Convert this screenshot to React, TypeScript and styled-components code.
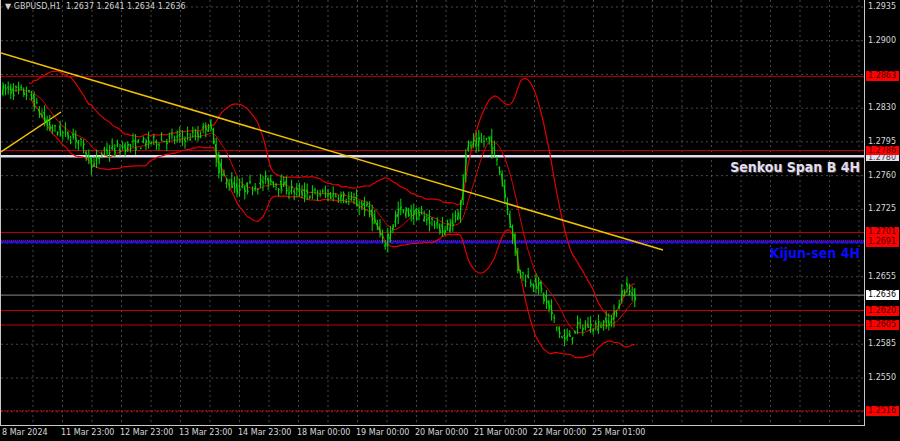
import React from "react";
import styled, { createGlobalStyle } from "styled-components";

const Global = createGlobalStyle`
  html, body { margin: 0; padding: 0; background: #000; }
  body { font-family: "DejaVu Sans", "Liberation Sans", sans-serif; }
`;

const W = 865;
const H = 426;
const py = (p: number) => 7 + (12935 - p * 10000) * 0.9636;

const Frame = styled.div`
  display: grid;
  grid-template-columns: ${W}px 35px;
  grid-template-rows: ${H}px 15px;
  width: 900px;
  height: 441px;
  background: #000;
  overflow: hidden;
`;
const ChartBox = styled.div`
  position: relative;
  border: 1px solid #c8c8c8;
  border-top: none;
  box-sizing: border-box;
`;
const Header = styled.div`
  position: absolute;
  left: 4px;
  top: 2px;
  font-size: 8px;
  color: #d0d0d0;
`;
const Axis = styled.div`
  position: relative;
  font-size: 8px;
  color: #d8d8d8;
`;
const AxisLabel = styled.div<{ $top: number; $bg?: string; $fg?: string; $thin?: boolean }>`
  position: absolute;
  left: 1px;
  top: ${(p) => (p.$thin ? p.$top - 1 : p.$top - 5)}px;
  width: 33px;
  height: ${(p) => (p.$thin ? 6 : 10)}px;
  line-height: ${(p) => (p.$thin ? 6 : 10)}px;
  overflow: hidden;
  padding-left: 2px;
  box-sizing: border-box;
  background: ${(p) => p.$bg || "transparent"};
  color: ${(p) => p.$fg || "#d8d8d8"};
`;
const TimeAxis = styled.div`
  display: flex;
  padding: 2px 0 0 2px;
  font-size: 8px;
  color: #d8d8d8;
`;
const TimeLabel = styled.div`
  flex: 0 0 59px;
  white-space: nowrap;
`;
const LineTag = styled.div<{ $top: number; $color: string; $shadow: string }>`
  position: absolute;
  right: 4px;
  top: ${(p) => p.$top}px;
  font-family: "DejaVu Sans Condensed", "Liberation Sans Narrow", sans-serif;
  font-weight: bold;
  font-size: 14px;
  color: ${(p) => p.$color};
  text-shadow: 1px 1px 0 ${(p) => p.$shadow};
`;

const keys: [number, number][] = [
  [2, 1.285], [30, 1.2845], [50, 1.281], [80, 1.2797], [95, 1.277], [105, 1.2785], [150, 1.2795],
  [200, 1.2802], [210, 1.2815], [222, 1.276], [240, 1.2745], [270, 1.2755], [300, 1.2742],
  [340, 1.274], [370, 1.2725], [385, 1.2688], [400, 1.2725], [430, 1.2715], [445, 1.2702],
  [460, 1.272], [468, 1.279], [490, 1.2798], [500, 1.277], [510, 1.272], [520, 1.266],
  [540, 1.2645], [555, 1.261], [565, 1.2588], [580, 1.2603], [600, 1.2605], [615, 1.2612],
  [625, 1.2645], [635, 1.2636],
];
const interp = (x: number) => {
  for (let i = 0; i < keys.length - 1; i++) {
    const [x0, p0] = keys[i], [x1, p1] = keys[i + 1];
    if (x >= x0 && x <= x1) return p0 + ((p1 - p0) * (x - x0)) / (x1 - x0);
  }
  return keys[keys.length - 1][1];
};
let seed = 7;
const rnd = () => { seed = (seed * 16807) % 2147483647; return seed / 2147483647; };
type C = { x: number; o: number; c: number; h: number; l: number };
const candles: C[] = [];
for (let x = 2; x <= 635; x += 2.6) {
  const o = interp(x) + (rnd() - 0.5) * 0.0012;
  const c = interp(x + 2.6) + (rnd() - 0.5) * 0.0012;
  const h = Math.max(o, c) + rnd() * 0.0008;
  const l = Math.min(o, c) - rnd() * 0.0008;
  candles.push({ x, o, c, h, l });
}
const band = (n: number, k: number) =>
  candles.map((_, i) => {
    const s = candles.slice(Math.max(0, i - n + 1), i + 1).map((c) => c.c);
    const m = s.reduce((a, b) => a + b, 0) / s.length;
    const sd = Math.sqrt(s.reduce((a, b) => a + (b - m) ** 2, 0) / s.length);
    return m + k * sd;
  });
const pathOf = (vals: number[], from = 0) =>
  vals.slice(from).map((v, i) => `${i ? "L" : "M"}${candles[i + from].x.toFixed(1)},${py(v).toFixed(1)}`).join(" ");
const up = band(22, 2.1), lo = band(22, -2.1), mid = band(10, 0);

const redLevels = [1.2863, 1.2786, 1.2701, 1.262, 1.2605];
const grid = [1.2935, 1.29, 1.2865, 1.283, 1.2795, 1.276, 1.2725, 1.269, 1.2655, 1.262, 1.2585, 1.255, 1.2515];
const axisLabels = [1.2935, 1.29, 1.283, 1.2795, 1.276, 1.2725, 1.2655, 1.2585, 1.255];
const times = ["8 Mar 2024", "11 Mar 23:00", "12 Mar 23:00", "13 Mar 23:00", "14 Mar 23:00",
  "18 Mar 00:00", "19 Mar 00:00", "20 Mar 00:00", "21 Mar 00:00", "22 Mar 00:00", "25 Mar 01:00"];

export default function App() {
  return (
    <Frame>
      <Global />
      <ChartBox>
        <svg width={W - 2} height={H - 1}>
          {Array.from({ length: 29 }, (_, i) => 32 + i * 29.5).map((x) => (
            <line key={x} x1={x} x2={x} y1={0} y2={H} stroke="#777" strokeDasharray="2 3" strokeWidth={0.6} />
          ))}
          {grid.map((g) => (
            <line key={g} x1={0} x2={W} y1={py(g)} y2={py(g)} stroke="#777" strokeDasharray="2 3" strokeWidth={0.6} />
          ))}
          <line x1={0} x2={W} y1={py(1.2516)} y2={py(1.2516)} stroke="#d00000" strokeDasharray="2 1" />
          {redLevels.map((p) => (
            <line key={p} x1={0} x2={W} y1={py(p)} y2={py(p)} stroke="#c00000" />
          ))}
          <line x1={0} x2={W} y1={py(1.2636)} y2={py(1.2636)} stroke="#888" />
          <line x1={0} x2={W} y1={py(1.278)} y2={py(1.278)} stroke="#e6dcf0" strokeWidth={2.5} />
          <line x1={0} x2={W} y1={py(1.2691)} y2={py(1.2691)} stroke="#1010ff" strokeWidth={2.5} />
          <line x1={0} x2={W} y1={py(1.2691) - 1.5} y2={py(1.2691) - 1.5} stroke="#d00000" strokeDasharray="1 1" />
          <path d={pathOf(up, 10)} stroke="#e00000" fill="none" strokeWidth={1.2} />
          <path d={pathOf(lo, 10)} stroke="#e00000" fill="none" strokeWidth={1.2} />
          <path d={pathOf(mid, 3)} stroke="#e00000" fill="none" />
          <path d="M0,152 L60,112" stroke="#f0c000" strokeWidth={1.5} />
          {candles.map((c, i) => (
            <g key={i} stroke="#00e000">
              <line x1={c.x} x2={c.x} y1={py(c.h)} y2={py(c.l)} />
              <line x1={c.x - 0.8} x2={c.x + 0.8} y1={py(c.o)} y2={py(c.c)} />
            </g>
          ))}
          <line x1={0} y1={53} x2={662} y2={250} stroke="#f0c000" strokeWidth={1.5} />
        </svg>
        <Header>▼ GBPUSD,H1&nbsp; 1.2637 1.2641 1.2634 1.2636</Header>
        <LineTag $top={py(1.278) + 3} $color="#e4dcf0" $shadow="#444">Senkou Span B 4H</LineTag>
        <LineTag $top={py(1.2691) + 3} $color="#0a0aff" $shadow="#000">Kijun-sen 4H</LineTag>
      </ChartBox>
      <Axis>
        {axisLabels.map((a) => (
          <AxisLabel key={a} $top={py(a)}>{a.toFixed(4)}</AxisLabel>
        ))}
        {redLevels.concat([1.2691, 1.2516]).map((p) => (
          <AxisLabel key={p} $top={py(p)} $bg="#ff0000" $fg="#400">{p.toFixed(4)}</AxisLabel>
        ))}
        <AxisLabel $top={py(1.278)} $thin $bg="#e8e0f0" $fg="#444">1.2780</AxisLabel>
        <AxisLabel $top={py(1.2636)} $bg="#fff" $fg="#000">1.2636</AxisLabel>
      </Axis>
      <TimeAxis>
        {times.map((t) => (
          <TimeLabel key={t}>{t}</TimeLabel>
        ))}
      </TimeAxis>
      <div />
    </Frame>
  );
}
